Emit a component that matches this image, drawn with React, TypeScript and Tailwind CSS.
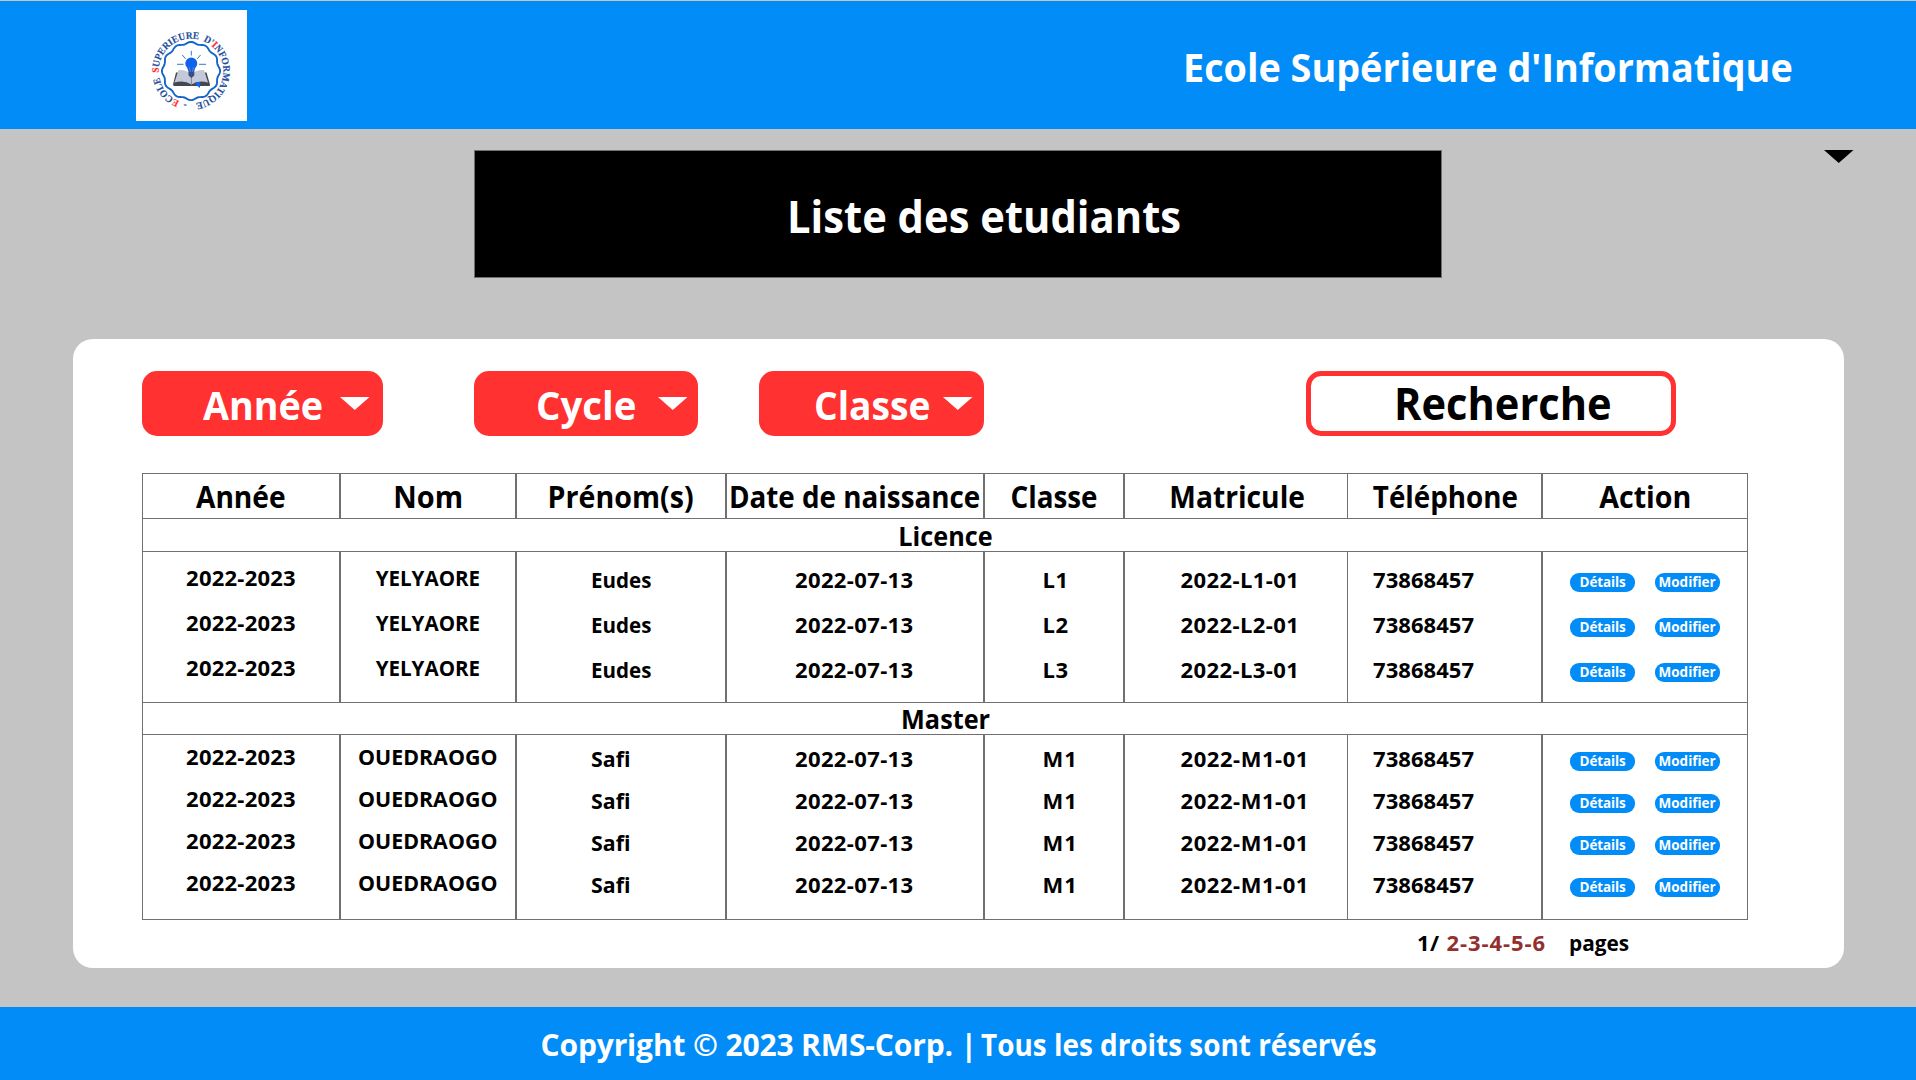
import type { ReactNode } from "react";

const WAVE = (() => {
  const pts: string[] = [];
  for (let i = 0; i <= 180; i++) {
    const a = (i / 180) * Math.PI * 2;
    const r = 28.2 + 0.9 * Math.cos(a * 12);
    pts.push(`${(55 + r * Math.cos(a)).toFixed(2)},${(61 + r * Math.sin(a)).toFixed(2)}`);
  }
  return pts.join(" ");
})();

function Logo() {
  return (
    <svg viewBox="0 0 111 111" className="mt-[9px] ml-[136px] h-[111px] w-[111px] shrink-0 bg-white">
      <defs>
        <path id="ring" d="M55 93.3 A32.3 32.3 0 0 1 55 28.7 A32.3 32.3 0 0 1 55 93.3" />
      </defs>
      <text fill="#1f4e9e" stroke="#1f4e9e" strokeWidth="0.15" className="font-['Liberation_Serif'] text-[10px] font-bold [word-spacing:2.5px]">
        <textPath href="#ring" startOffset="4" textLength="194" lengthAdjust="spacingAndGlyphs">
          - <tspan fill="#ff2a2a" stroke="#ff2a2a">E</tspan>COLE <tspan fill="#ff2a2a" stroke="#ff2a2a">S</tspan>UPERIEURE D'<tspan fill="#ff2a2a" stroke="#ff2a2a">I</tspan>NFORMATIQUE
        </textPath>
      </text>
      <polygon points={WAVE} fill="none" stroke="#1765c8" strokeWidth="1.9" />
      <path d="M40 62.5 L37 74.5 Q37 76 39 76 H72 Q74.5 76 74 74.5 L70.5 62.5 Z" fill="#45484f" />
      <path d="M42.5 60 Q50 59.5 55.3 64 Q60.500 59.500 68 60 L72 72.500 Q62 70 55.500 74.500 Q48.500 70 38.500 72.500 Z" fill="#c3c9d8" />
      <path d="M55.400 64 V74" stroke="#6f7687" strokeWidth="0.8" />
      <path d="M60 72 H64 V78 L62 76.500 L60 75 Z" fill="#1463e6" />
      <path d="M49.300 53.500 a6 6 0 0 1 12 0 c0 3-2.800 4-2.800 7.500 h-6.400 c0-3.500-2.800-4.500-2.800-7.500 Z" fill="#0f62ea" />
      <path d="M52.500 61 h5.800 v4.500 l-2.900 2.500 l-2.900 -2.500 Z" fill="#3a4c80" />
      <path d="M53.200 57 l1.200 5 M57.500 57 l-1.200 5" stroke="#5f8fe6" strokeWidth="0.7" />
      <path d="M55.300 40.800 V45.500 M41 54.300 H47.500 M63 54.300 H70 M46.300 45 L49.600 48.800 M64.500 45 L61.200 48.800" stroke="#2d7cc9" strokeWidth="1" />
    </svg>
  );
}

function Caret({ className }: { className: string }) {
  return (
    <svg viewBox="0 0 29 13" preserveAspectRatio="none" className={`h-[13px] w-[29.5px] shrink-0 ${className}`}>
      <path d="M0 0 H29 L14.500 13 Z" fill="currentColor" />
    </svg>
  );
}

function Filter({ label, box, text, caret }: { label: string; box: string; text: string; caret: string }) {
  return (
    <button className={`flex h-[65px] items-start justify-between rounded-[15px] bg-[#ff3131] text-white ${box}`}>
      <span className={`mt-[14px] origin-left text-[40px] leading-none ${text}`}>{label}</span>
      <Caret className={`mt-[26px] ${caret}`} />
    </button>
  );
}

const GRID = "grid grid-cols-[198px_176px_210px_258px_140px_223px_195px_206px] border-t border-[#707070]";

const EDGES = [
  "border-x",
  "border-x",
  "border-x",
  "border-x",
  "border-x",
  "border-l",
  "border-x",
  "border-x",
];

const HEADERS: [string, string][] = [
  ["Année", "scale-x-[0.938]"],
  ["Nom", "scale-x-[0.964]"],
  ["Prénom(s)", "scale-x-[0.953]"],
  ["Date de naissance", "scale-x-[0.927]"],
  ["Classe", "scale-x-[0.927]"],
  ["Matricule", "ml-[2px] scale-x-[0.94]"],
  ["Téléphone", "ml-[2px] scale-x-[0.926]"],
  ["Action", "scale-x-[0.954]"],
];

type Student = { annee: string; nom: string; prenom: string; naissance: string; classe: string; matricule: string; tel: string };

const LICENCE: Student[] = ["L1", "L2", "L3"].map((classe) => ({
  annee: "2022-2023",
  nom: "YELYAORE",
  prenom: "Eudes",
  naissance: "2022-07-13",
  classe,
  matricule: `2022-${classe}-01`,
  tel: "73868457",
}));

const MASTER: Student[] = [0, 1, 2, 3].map(() => ({
  annee: "2022-2023",
  nom: "OUEDRAOGO",
  prenom: "Safi",
  naissance: "2022-07-13",
  classe: "M1",
  matricule: "2022-M1-01",
  tel: "73868457",
}));

function Pills({ line }: { line: string }) {
  return (
    <div className={`flex items-center gap-5 ${line}`}>
      <button className="h-[19px] w-[65px] rounded-[9px] bg-[#018cf8] pl-[9.5px] text-left text-[13.5px] leading-[17px] tracking-[-0.1px] text-white">Détails</button>
      <button className="h-[19px] w-[65px] rounded-[9px] bg-[#018cf8] pl-[3.5px] text-left text-[13.5px] leading-[17px] text-white">Modifier</button>
    </div>
  );
}

function Section({ title, row, text }: { title: string; row: string; text: string }) {
  return (
    <div className={`flex justify-center border-x border-t border-[#707070] text-[27px] ${row}`}>
      <span className={text}>{title}</span>
    </div>
  );
}

type BodyProps = { rows: Student[]; height: string; line: string; high: string; low: string; pills: string; nom: string; prenom: string; classe: string; matricule: string };

function Body({ rows, height, line, high, low, pills, nom, prenom, classe, matricule }: BodyProps) {
  const column = (index: number, style: string, pick: (s: Student) => ReactNode) => (
    <div className={`border-[#707070] ${EDGES[index]} ${style}`}>
      {rows.map((s, i) => (
        <div key={i} className={line}>{pick(s)}</div>
      ))}
    </div>
  );
  return (
    <div className={`${GRID} ${height} text-[22px]`}>
      {column(0, `text-center tracking-[0.23px] ${high}`, (s) => s.annee)}
      {column(1, `text-center ${high}`, (s) => <span className={`inline-block ${nom}`}>{s.nom}</span>)}
      {column(2, `pl-[74px] ${low}`, (s) => <span className={`inline-block origin-left ${prenom}`}>{s.prenom}</span>)}
      {column(3, `pl-[68px] tracking-[0.37px] ${low}`, (s) => s.naissance)}
      {column(4, `pl-[57.5px] ${classe} ${low}`, (s) => s.classe)}
      {column(5, `pl-[55.5px] ${matricule} ${low}`, (s) => s.matricule)}
      {column(6, `pl-[25px] tracking-[0.05px] ${low}`, (s) => s.tel)}
      <div className={`border-x border-[#707070] pl-[27px] ${pills}`}>
        {rows.map((_, i) => (
          <Pills key={i} line={line} />
        ))}
      </div>
    </div>
  );
}

export default function App() {
  return (
    <div className="flex h-[1080px] w-[1916px] flex-col overflow-hidden bg-[#c4c4c4] font-['Open_Sans','Noto_Sans',sans-serif] font-bold text-black">
      <header className="flex h-[129px] shrink-0 items-start border-t border-[#c4c4c4] bg-[#018cf8]">
        <Logo />
        <h1 className="mt-[46px] ml-[936px] origin-left scale-x-[0.944] text-[40px] leading-none whitespace-nowrap text-white">Ecole Supérieure d'Informatique</h1>
      </header>

      <div className="mt-[21px] ml-[474px] flex shrink-0 items-start">
        <div className="h-[128px] w-[968px] border border-[#707070] bg-black pt-[42px] pl-[311.5px] text-[45px] leading-none text-white">
          <h2 className="w-max origin-left scale-x-[0.927]">Liste des etudiants</h2>
        </div>
        <Caret className="ml-[382px] text-black" />
      </div>

      <main className="mt-[61px] ml-[73px] h-[629px] w-[1771px] shrink-0 rounded-[20px] bg-white pt-8 pl-[69px]">
        <div className="flex">
          <Filter label="Année" box="w-[241px] pl-[61px]" text="scale-x-[0.942]" caret="mr-[13.5px]" />
          <Filter label="Cycle" box="ml-[91px] w-[224px] pl-[62px]" text="scale-x-[0.96]" caret="mr-[11px]" />
          <Filter label="Classe" box="ml-[61px] w-[225px] pl-[54.5px]" text="scale-x-[0.93]" caret="mr-[11.5px]" />
          <div className="ml-[322px] h-[65px] w-[370px] rounded-[15px] border-[5px] border-[#ff3131] pt-1 pl-[82.5px] text-[45px] leading-none">
            <span className="block w-max origin-left scale-x-[0.925]">Recherche</span>
          </div>
        </div>

        <div className="mt-[37px] w-[1606px] border-b border-[#707070]">
          <div className={`${GRID} h-[45px] text-[30px] leading-[45px] whitespace-nowrap`}>
            {HEADERS.map(([label, style], i) => (
              <div key={label} className={`flex h-11 justify-center border-[#707070] ${EDGES[i]}`}>
                <span className={style}>{label}</span>
              </div>
            ))}
          </div>
          <Section title="Licence" row="h-[33px] leading-[34px]" text="ml-px scale-x-[0.934]" />
          <Body rows={LICENCE} height="h-[151px]" line="h-[45px] leading-[45px]" high="pt-[3px]" low="pt-[5px]" pills="pt-2" nom="scale-x-[0.935]" prenom="scale-x-[0.935]" classe="tracking-[0.57px]" matricule="tracking-[0.4px]" />
          <Section title="Master" row="h-[32px] leading-[31px]" text="ml-[2px] scale-x-[0.936]" />
          <Body rows={MASTER} height="h-[185px]" line="h-[42px] leading-[42px]" high="pt-0" low="pt-[2px]" pills="pt-[5.5px]" nom="scale-x-[0.973]" prenom="scale-x-[0.97]" classe="tracking-[1px]" matricule="tracking-[0.55px]" />
        </div>

        <div className="mt-[11px] ml-[1275px] flex text-[22px] leading-none">
          <span className="w-[29.5px] tracking-[0.42px]">1/</span>
          <span className="w-[122.5px] tracking-[0.92px] text-[#942f2f]">2-3-4-5-6</span>
          <span className="origin-left scale-x-[0.945]">pages</span>
        </div>
      </main>

      <footer className="mt-[39px] flex h-[73px] shrink-0 bg-[#018cf8] pt-[23px] pl-[540.5px] text-[30px] leading-none whitespace-nowrap text-white">
        <span className="w-[440.5px] tracking-[-0.15px]">Copyright © 2023 RMS-Corp. |</span>
        <span className="origin-left scale-x-[0.93]">Tous les droits sont réservés</span>
      </footer>
    </div>
  );
}
